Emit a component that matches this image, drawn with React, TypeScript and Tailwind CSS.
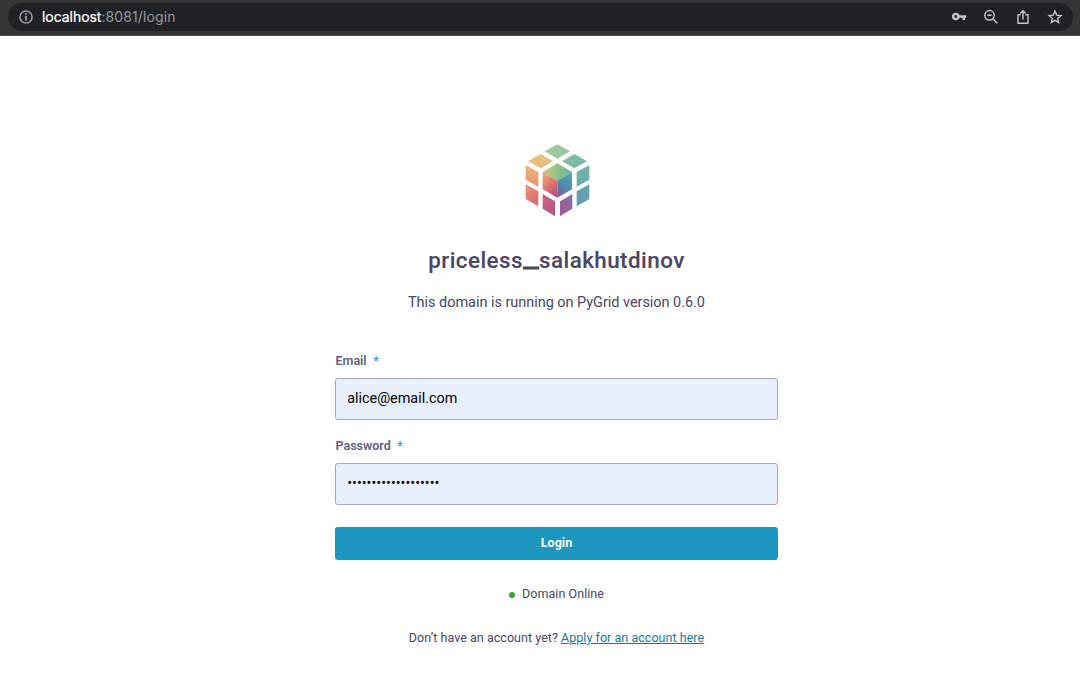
import React from "react";

function BrowserBar() {
  return (
    <header className="h-9 shrink-0 border-b border-[#4a4a4c] bg-[#353535] pt-[3px] pr-[7px] pl-2">
      <div className="flex h-7 items-center rounded-full bg-[#202124] pr-[10px] pl-[11px] font-['Inter','Liberation_Sans',sans-serif] text-[14px]">
        <svg width="14" height="14" viewBox="0 0 14 14" fill="none" stroke="#9aa0a6" strokeWidth="1.5">
          <circle cx="7" cy="7" r="6.1" />
          <path d="M7 6.1V10.5M7 3.3V5" strokeWidth="1.8" />
        </svg>
        <div className="-mt-px ml-[9px] text-[#96999d]">
          <span className="inline-block tracking-[-0.05px] text-white [-webkit-text-stroke:0.2px_white]">localhost</span>
          <span className="tracking-[0.12px]">:8081/login</span>
        </div>
        <div className="ml-auto flex items-center gap-4 text-[#c4c6c9]">
          <svg width="16" height="16" viewBox="0 0 16 16" fill="none" stroke="currentColor">
            <circle cx="4.8" cy="7.5" r="2.6" strokeWidth="2.4" />
            <path d="M7.5 7.5H15M12.8 7.5V11" strokeWidth="2.6" />
          </svg>
          <svg width="16" height="16" viewBox="0 0 16 16" fill="none" stroke="currentColor" strokeWidth="1.5">
            <circle cx="6.5" cy="6.3" r="4.7" />
            <path d="M9.8 9.7L14.3 14.2M4.3 6.3H8.7" />
          </svg>
          <svg width="16" height="16" viewBox="0 0 16 16" fill="none" stroke="currentColor" strokeWidth="1.4">
            <path d="M5.6 5.7H3V14.2H13V5.7H10.4M8 10.5V2M5.3 4.5L8 1.8L10.7 4.5" strokeLinejoin="round" />
          </svg>
          <svg width="16" height="16" viewBox="0 0 16 16" fill="none" stroke="currentColor" strokeWidth="1.4">
            <path d="M8 2.1L9.7 6.1L14 6.5L10.7 9.4L11.7 13.6L8 11.4L4.3 13.6L5.3 9.4L2 6.5L6.3 6.1Z" />
          </svg>
        </div>
      </div>
    </header>
  );
}

function Logo() {
  return (
    <svg width="66" height="73" viewBox="30 26 198 219" className="ml-[2px]">
      <defs>
        <linearGradient id="top" x1="0" x2="1"><stop stopColor="#a5ce99" /><stop offset="1" stopColor="#90c79f" /></linearGradient>
        <linearGradient id="amber" x1="0" x2="1"><stop stopColor="#f0bd77" /><stop offset="1" stopColor="#d8c480" /></linearGradient>
        <linearGradient id="sage" x1="0" x2="1"><stop stopColor="#84bea3" /><stop offset="1" stopColor="#77b6a8" /></linearGradient>
        <linearGradient id="orange" x1="0" y1="0" x2="0" y2="1"><stop stopColor="#f0b878" /><stop offset="1" stopColor="#e99175" /></linearGradient>
        <linearGradient id="coral" x1="0" y1="0" x2="0.5" y2="1"><stop stopColor="#ec9873" /><stop offset="1" stopColor="#d96c76" /></linearGradient>
        <linearGradient id="teal" x1="0" y1="0" x2="0" y2="1"><stop stopColor="#76b7a8" /><stop offset="1" stopColor="#62a9b1" /></linearGradient>
        <linearGradient id="blue" x1="0.7" y1="0" x2="0.2" y2="1"><stop stopColor="#60a7b3" /><stop offset="1" stopColor="#6d98b6" /></linearGradient>
        <linearGradient id="rose" x1="0" y1="0" x2="1" y2="1"><stop stopColor="#cc637e" /><stop offset="1" stopColor="#b15486" /></linearGradient>
        <linearGradient id="violet" x1="1" y1="0" x2="0" y2="1"><stop stopColor="#7f77ac" /><stop offset="1" stopColor="#a6568b" /></linearGradient>
        <linearGradient id="innerTop" x1="0" y1="0.5" x2="1" y2="0.5"><stop stopColor="#d9bf77" /><stop offset="0.48" stopColor="#8fc586" /><stop offset="1" stopColor="#68b596" /></linearGradient>
        <linearGradient id="innerLeft" x1="0.2" y1="0" x2="0.8" y2="1"><stop stopColor="#eda36e" /><stop offset="0.5" stopColor="#df7771" /><stop offset="1" stopColor="#af4d80" /></linearGradient>
        <linearGradient id="innerRight" x1="0.8" y1="0" x2="0.2" y2="1"><stop stopColor="#53a8ad" /><stop offset="0.55" stopColor="#4d8dae" /><stop offset="1" stopColor="#8f5791" /></linearGradient>
      </defs>
      <path d="M127 27L165 48L127 70L89 48Z" fill="url(#top)" />
      <path d="M77 56L115 78L77 99L39 78Z" fill="url(#amber)" />
      <path d="M178 56L216 78L178 99L141 78Z" fill="url(#sage)" />
      <path d="M32 89L70 110V154L32 133Z" fill="url(#orange)" />
      <path d="M32 147L70 168V213L32 191Z" fill="url(#coral)" />
      <path d="M185 110L223 89V133L185 154Z" fill="url(#teal)" />
      <path d="M185 168L223 147V191L185 213Z" fill="url(#blue)" />
      <path d="M83 176L120 198V243L83 220Z" fill="url(#rose)" />
      <path d="M135 198L172 176V220L135 243Z" fill="url(#violet)" />
      <path d="M127 84L171 110L127 136L83 110Z" fill="url(#innerTop)" />
      <path d="M83 110L127 136V187L83 162Z" fill="url(#innerLeft)" />
      <path d="M127 136L171 110V162L127 187Z" fill="url(#innerRight)" />
    </svg>
  );
}

function Field({ label, type, value }: { label: string; type: string; value: string }) {
  return (
    <label className="flex flex-col">
      <span className="flex h-[18px] items-center gap-[7px] pl-[0.5px] text-[12.5px] font-bold text-[#625d80]">
        <span className="font-semibold">{label}</span>
        <span className="-ml-[0.5px] font-medium text-[#2d9fc5]">*</span>
      </span>
      <input
        type={type}
        defaultValue={value}
        className="mt-2 h-[42px] w-full rounded-[3px] border border-[#a8a5bd] bg-[#e8f0fe] px-[11.2px] pb-[2px] text-[14.4px] text-black outline-none"
      />
    </label>
  );
}

export default function App() {
  return (
    <div className="flex h-[689px] flex-col overflow-hidden bg-white font-['Roboto','Liberation_Sans',sans-serif] text-[#4a4665]">
      <BrowserBar />
      <main className="ml-[335px] flex w-[443px] flex-col items-center pt-[108px]">
        <Logo />
        <h1 className="mt-[27px] h-8 text-[22.4px] leading-8 font-medium tracking-[0.45px] whitespace-nowrap [-webkit-text-stroke:0.1px_#4a4665]">
          priceless<span className="mr-[2.5px] ml-[3.5px] inline-block origin-bottom -translate-y-px scale-x-[1.5] tracking-normal [-webkit-text-stroke:0.8px_#4a4665]">_</span>salakhutdinov
        </h1>
        <p className="mt-[17px] text-[14.5px] leading-5 tracking-[-0.04px] whitespace-nowrap">This domain is running on PyGrid version 0.6.0</p>
        <form className="mt-[39px] flex w-full flex-col" onSubmit={(event) => event.preventDefault()}>
          <div className="flex flex-col gap-[17px]">
            <Field label="Email" type="email" value="alice@email.com" />
            <Field label="Password" type="password" value="alice-password-1234" />
          </div>
          <button className="mt-[22px] h-[33px] rounded-[3px] bg-[#1d96c0] pb-px text-[12.5px] font-bold text-white">Login</button>
        </form>
        <div className="mt-[25px] flex h-[18px] items-center gap-[7px] text-[12.5px] tracking-[0.05px]">
          <span className="mt-px size-[6px] rounded-full bg-[#2fa92f]" />
          <span>Domain Online</span>
        </div>
        <p className="mt-[26px] text-[12.5px] leading-[18px] tracking-[0.04px] whitespace-nowrap">
          Don’t have an account yet? <a href="#" className="text-[#167b98] underline underline-offset-1">Apply for an account here</a>
        </p>
      </main>
    </div>
  );
}
